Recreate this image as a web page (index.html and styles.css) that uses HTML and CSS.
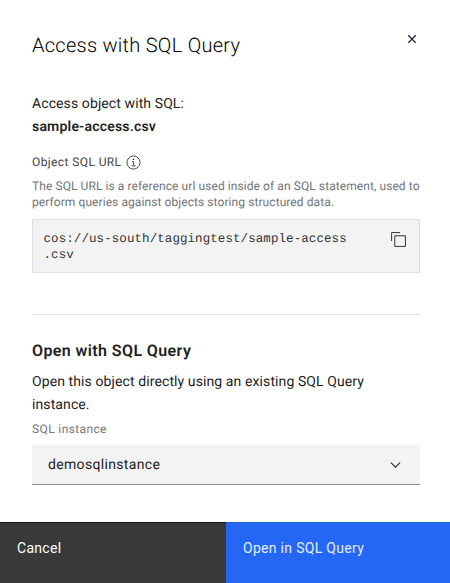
FILE: index.html
```html
<!DOCTYPE html>
<html lang="en">
<head>
<meta charset="utf-8">
<title>Access with SQL Query</title>
<link rel="stylesheet" href="styles.css">
</head>
<body>
<main class="panel">
  <header class="header">
    <h1 class="title">Access with SQL Query</h1>
    <svg class="close" viewBox="0 0 10 10" aria-label="Close"><path d="M1.3 1.3 8.7 8.7M8.7 1.3 1.3 8.7"/></svg>
  </header>
  <p class="body"><span class="intro-text">Access object with SQL:</span><br><strong class="file">sample-access.csv</strong></p>
  <div class="label"><span>Object SQL URL</span>
    <svg class="info" viewBox="0 0 16 16"><circle cx="8" cy="8" r="7"/><path d="M6.3 7H8.2V11.5M6 11.6H10.3"/><circle class="dot" cx="8" cy="4.5" r=".9"/></svg>
  </div>
  <p class="helper">The SQL URL is a reference url used inside of an SQL statement, used to<br>perform queries against objects storing structured data.</p>
  <div class="snippet">
    <code>cos://us-south/taggingtest/sample-access<br>.csv</code>
    <svg class="copy" viewBox="0 0 16 16"><path d="M4.5 4.5H14.5V14.5H4.5ZM1.5 9.5V1.5H9.5"/></svg>
  </div>
  <hr class="divider">
  <h2 class="subtitle">Open with SQL Query</h2>
  <p class="body open">Open this object directly using an existing SQL Query<br>instance.</p>
  <div class="select-label">SQL instance</div>
  <div class="select"><span>demosqlinstance</span>
    <svg class="chevron" viewBox="0 0 12 8"><path d="M1 1.5 6 6.4 11 1.5"/></svg>
  </div>
</main>
<footer class="footer">
  <button class="button cancel">Cancel</button>
  <button class="button primary">Open in SQL Query</button>
</footer>
</body>
</html>
```
FILE: styles.css
```css
* { box-sizing: border-box; }
body {
  margin: 0;
  height: 583px;
  display: flex;
  flex-direction: column;
  overflow: hidden;
  background: #fff;
  color: #222;
  font-family: Roboto, sans-serif;
  text-rendering: geometricPrecision;
}
h1, h2, p { margin: 0; }
svg { display: block; fill: none; stroke: #2b2b2b; flex: none; }
.panel { height: 522px; padding: 33px 30px 0 32px; }
.header { display: flex; justify-content: space-between; height: 60px; }
.title { font-size: 20px; line-height: 24px; font-weight: 300; letter-spacing: .27px; color: #000; }
.close { width: 10px; height: 10px; margin: 1px 3px 0 0; stroke: #1c2452; stroke-width: 1.3; }
.body { font-size: 14px; line-height: 23px; font-weight: 400; letter-spacing: .1px; }
.file { font-weight: 600; letter-spacing: .2px; }
.label { display: flex; align-items: center; gap: 5px; height: 16px; margin-top: 15px; font-size: 12px; letter-spacing: .4px; font-weight: 400; color: #444; }
.info { width: 15px; height: 15px; stroke-width: .9; }
.info .dot { fill: #2b2b2b; stroke: none; }
.helper { margin-top: 8px; font-size: 12px; line-height: 16px; letter-spacing: .08px; color: #71757a; white-space: nowrap; }
.snippet { display: flex; justify-content: space-between; width: 388px; height: 54px; margin-top: 9px; padding: 11px 12px 0 10.5px; background: #f3f3f3; border: 1px solid #dfdfdf; }
.snippet code { font: 12.5px/16px "Liberation Mono", monospace; letter-spacing: .08px; color: #333; }
.copy { width: 17px; height: 17px; margin-top: 0; stroke-width: .9; }
.divider { width: 388px; height: 1px; margin: 41px 0 0; border: 0; background: #dedede; }
.subtitle { margin-top: 24px; font-size: 16px; line-height: 24px; font-weight: 600; letter-spacing: .4px; }
.open { margin-top: 8px; }
.select-label { margin-top: 4px; font-size: 12px; line-height: 16px; letter-spacing: .38px; color: #767676; }
.select { display: flex; align-items: center; justify-content: space-between; width: 388px; height: 40px; margin-top: 8px; padding: 0 19px 0 16px; border-bottom: 1px solid #8d8d8d; background: #f3f3f3; font-size: 14px; letter-spacing: .33px; font-weight: 400; }
.chevron { width: 11px; height: 8px; stroke-width: 1.2; }
.footer { display: flex; height: 61px; }
.button { display: flex; align-items: flex-start; width: 226px; height: 61px; padding: 17px 17px 0; border: 0; border-top: 1px solid #181818; background: #393939; color: #fff; font: 400 14px/16px Roboto, sans-serif; letter-spacing: .3px; }
.primary { width: 224px; background: #2567f5; border-top-color: #245bd2; color: #e4edff; }
```
